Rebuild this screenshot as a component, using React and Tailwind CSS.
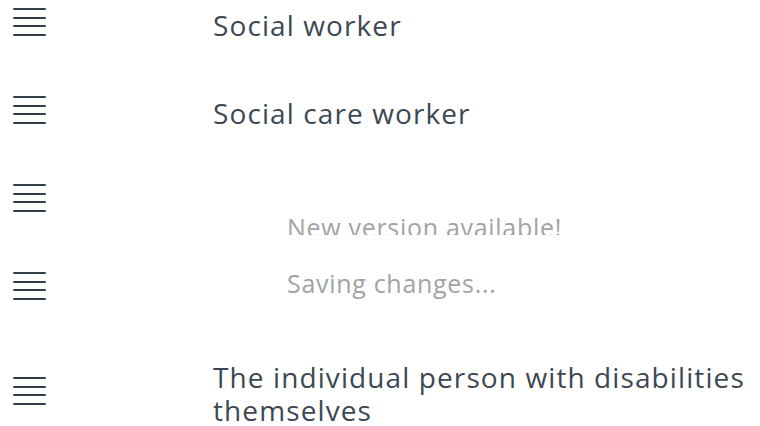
import React from 'react';

const items = [
  { id: 1, label: 'Social worker' },
  { id: 2, label: 'Social care worker' },
  { id: 3, label: '' },
  { id: 4, label: '' },
  { id: 5, label: 'The individual person with disabilities themselves' },
];

// four-bar drag handle
function Handle() {
  return (
    <svg width="34" height="28" viewBox="0 0 34 28" className="text-[#333e4a]">
      {[0, 9, 17, 26].map((y) => (
        <rect key={y} x="0" y={y} width="33" height="2" rx="1" fill="currentColor" />
      ))}
    </svg>
  );
}

function Row({ label }) {
  return (
    <li className="grid grid-cols-[213px_1fr] items-center py-[24.5px]">
      <div className="pl-[13px] flex items-center">
        <Handle />
      </div>
      <div className="min-h-[39px] pt-[6px] pr-2 text-[28px] leading-[33px] tracking-[1.1px] text-[#3d4854]">{label}</div>
    </li>
  );
}

export default function App() {
  return (
    <div
      className="relative w-[760px] h-[426px] overflow-hidden bg-white"
      style={{ fontFamily: "'Open Sans', 'Liberation Sans', sans-serif" }}
    >
      <ul className="-mt-[22px]">
        {items.map((it) => (
          <Row key={it.id} label={it.label} />
        ))}
      </ul>

      {/* status banner sliding out of view */}
      <div className="absolute left-[287px] top-[200px] h-[35px] overflow-hidden">
        <div className="pt-[13px] text-[25px] leading-[28px] tracking-[0.7px] text-[#a3a3a3] whitespace-nowrap">New version available!</div>
      </div>
      <div className="absolute left-[287px] top-[269px] text-[25px] leading-[28px] tracking-[0.7px] text-[#a3a3a3] whitespace-nowrap">
        Saving changes...
      </div>
    </div>
  );
}
